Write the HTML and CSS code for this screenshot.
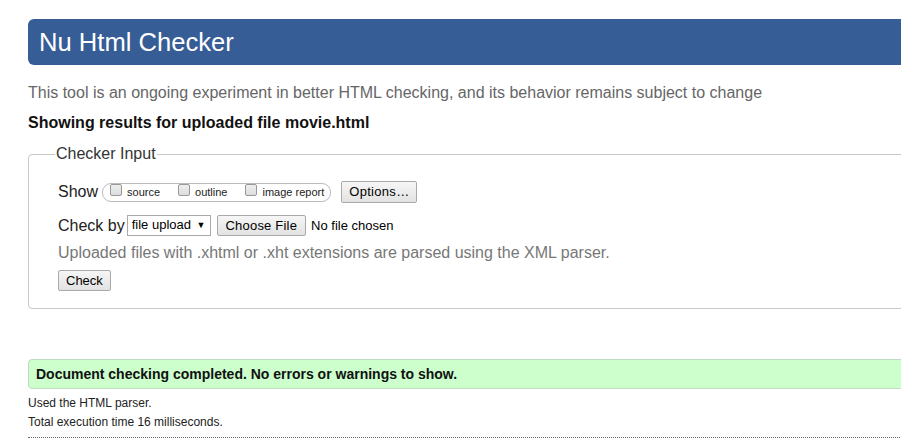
FILE: index.html
```html
<!DOCTYPE html>
<html>
<head>
<meta charset="utf-8">
<link rel="stylesheet" href="styles.css">
</head>
<body>
<div class="page">
  <h1 class="title">Nu Html Checker</h1>
  <p class="intro">This tool is an ongoing experiment in better HTML checking, and its behavior remains subject to change</p>
  <p class="showing">Showing results for uploaded file movie.html</p>
  <fieldset class="input">
    <legend>Checker Input</legend>
    <div class="row show-row">
      <span class="lbl">Show</span>
      <span class="group">
        <span class="opt"><span class="cb"></span>source</span>
        <span class="opt"><span class="cb"></span>outline</span>
        <span class="opt"><span class="cb"></span>image report</span>
      </span>
      <span class="btn options">Options…</span>
    </div>
    <div class="row checkby-row">
      <span class="lbl">Check by</span>
      <span class="select">file upload <span class="arrow">▼</span></span>
      <span class="btn choose">Choose File</span>
      <span class="nofile">No file chosen</span>
    </div>
    <p class="note">Uploaded files with .xhtml or .xht extensions are parsed using the XML parser.</p>
    <span class="btn check">Check</span>
  </fieldset>
  <div class="success">Document checking completed. No errors or warnings to show.</div>
  <p class="small">Used the HTML parser.</p>
  <p class="small">Total execution time 16 milliseconds.</p>
  <div class="dots"></div>
</div>
</body>
</html>
```
FILE: styles.css
```css
html, body { margin: 0; padding: 0; overflow: hidden; background: #fff; }
body { font-family: "Liberation Sans", Arial, sans-serif; color: #000; }
.page { padding: 19px 0 0 28px; width: 1000px; }
.title {
  margin: 0; background: #365d95; color: #fff; font-weight: normal;
  font-size: 25.6px; line-height: 46px; height: 46px; padding-left: 11px;
  border-radius: 6px 0 0 6px;
}
.intro { margin: 18px 0 0; color: #666; font-size: 16px; line-height: 19px; }
.showing { margin: 11px 0 0; font-weight: bold; font-size: 16px; line-height: 19px; color: #111; }
.input {
  margin: 13px 0 0; border: 1px solid #c8c8c8; border-radius: 4px;
  padding: 8px 0 17px 29px; min-width: 0;
}
.input legend { font-size: 16px; color: #333; padding: 0 1px; margin-left: -3px; }
.row { display: flex; align-items: center; }
.lbl { font-size: 16px; color: #222; margin-right: 4px; }
.checkby-row .lbl { margin-right: 2px; }
.show-row { margin-top: 9px; height: 24px; }
.group {
  display: flex; align-items: center; border: 1px solid #bbb; border-radius: 9px;
  height: 17px; padding: 0 6px 0 7px; margin-right: 10px;
}
.opt { font-size: 11px; color: #222; display: flex; align-items: center; margin-right: 18px; }
.opt:last-child { margin-right: 0; }
.cb {
  width: 10px; height: 10px; border: 1px solid #999; border-radius: 2px;
  background: linear-gradient(#eee, #ddd); margin-right: 5px; margin-top: -5px;
}
.btn {
  display: inline-block; border: 1px solid #a9a9a9; border-radius: 2px;
  background: linear-gradient(#f6f6f6, #e2e2e2); font-size: 13px; color: #000;
  line-height: 19px; padding: 0 8px;
}
.options { letter-spacing: 0.3px; line-height: 20px; padding: 0 7px; }
.checkby-row { margin-top: 11px; }
.select {
  border: 1px solid #a9a9a9; font-size: 13px; line-height: 17px; padding: 0 4px 0 4px;
  margin-right: 6px; background: #fff;
}
.arrow { font-size: 9px; margin-left: 2px; position: relative; top: -1px; }
.choose { padding: 0 8px; letter-spacing: 0.2px; }
.nofile { font-size: 13px; margin-left: 5px; }
.note { margin: 7px 0 8px; color: #777; font-size: 16px; line-height: 19px; }
.check { padding: 0 7px; line-height: 19px; }
.success {
  margin-top: 50px; background: #ccffcc; border: 1px solid #c0dcc0; border-radius: 4px 0 0 4px;
  font-weight: bold; font-size: 14px; line-height: 28px; padding-left: 7px; color: #111;
}
.small { margin: 7px 0 0; font-size: 12px; line-height: 14px; color: #222; }
.small + .small { margin-top: 5px; }
.dots { margin-top: 8px; border-top: 1px dotted #666; }
```
